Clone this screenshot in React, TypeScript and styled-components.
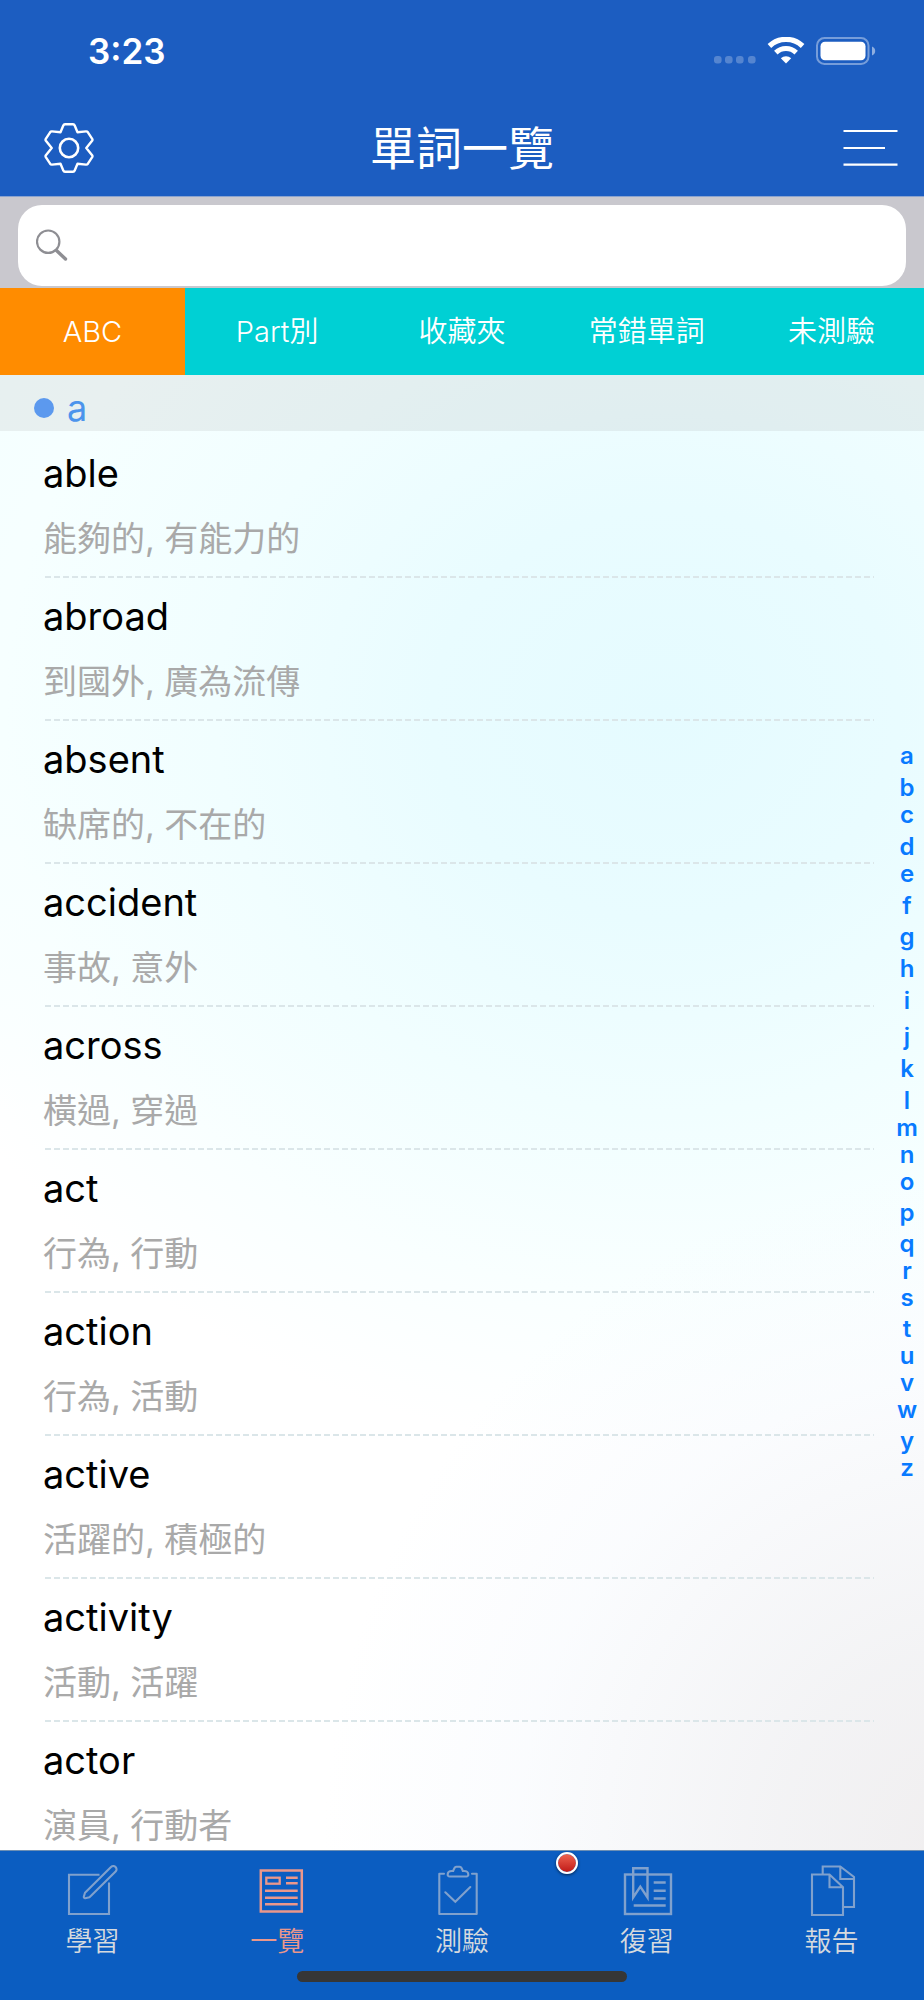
import React, { useState } from "react";
import styled, { createGlobalStyle } from "styled-components";

const GlobalStyle = createGlobalStyle`
  *, *::before, *::after { box-sizing: border-box; }
  body {
    margin: 0;
    font-family: Inter, "Noto Sans CJK TC", sans-serif;
    -webkit-font-smoothing: antialiased;
  }
  h1, h2, p, ul { margin: 0; padding: 0; font-weight: 400; }
  ul { list-style: none; }
  button { font: inherit; border: 0; padding: 0; background: none; cursor: pointer; }
  a { text-decoration: none; }
`;

const Screen = styled.div`
  display: flex;
  flex-direction: column;
  height: 100vh;
`;

const TopBar = styled.header`
  background: #1c5dc1;
  border-bottom: 1px solid #8aa3cf;
  color: #fff;
`;

const StatusBar = styled.div`
  display: flex;
  align-items: center;
  justify-content: space-between;
  height: 100px;
  padding: 2px 48px 0 88px;
`;

const Clock = styled.time`
  font-size: 35px;
  font-weight: 600;
  line-height: 44px;
`;

const StatusIcons = styled.div`
  display: flex;
  align-items: center;
  gap: 11px;
`;

const NavBar = styled.div`
  display: grid;
  grid-template-columns: 1fr auto 1fr;
  align-items: center;
  height: 96px;
  padding: 0 26px;
`;

const Title = styled.h1`
  font-size: 46px;
  line-height: 56px;
`;

const IconButton = styled.button<{ $end?: boolean }>`
  display: flex;
  margin-left: 18px;
  color: #fff;
  justify-self: ${(p) => (p.$end ? "end" : "start")};
`;

const SearchBar = styled.form`
  padding: 8px 18px 2px;
  background: #c9c8ce;
`;

const SearchField = styled.label`
  display: flex;
  align-items: center;
  height: 81px;
  padding: 0 18px;
  gap: 12px;
  border-radius: 24px;
  background: #fff;
  color: #8e8e93;
`;

const SearchInput = styled.input`
  flex: 1;
  min-width: 0;
  height: 56px;
  border: 0;
  outline: 0;
  background: transparent;
  font: inherit;
  font-size: 34px;
  color: #000;
`;

const FilterBar = styled.div`
  display: grid;
  grid-template-columns: repeat(5, 1fr);
  height: 87px;
  background: #00d0d4;
`;

const FilterTab = styled.button<{ $active: boolean }>`
  background: ${(p) => (p.$active ? "#ff8c00" : "transparent")};
  color: #fff;
  font-size: 29px;
  font-weight: 350;
  line-height: 40px;
`;

const Content = styled.main`
  position: relative;
  flex: 1;
  min-height: 0;
  background:
    radial-gradient(ellipse 70% 46% at 105% 100%, #f0eeef 0%, rgba(241, 241, 243, 0.85) 30%, rgba(246, 249, 253, 0.5) 70%, rgba(250, 253, 255, 0) 100%),
    radial-gradient(ellipse 90% 50% at 72% 23%, #e5fbff 0%, #e9fcff 28%, #f1feff 54%, rgba(247, 255, 255, 0.7) 80%, rgba(253, 255, 255, 0) 100%),
    linear-gradient(#f4ffff 0%, #f4ffff 25%, #fff 50%);
`;

const Scroller = styled.div`
  height: 100%;
  overflow-y: auto;
  scrollbar-width: none;
`;

const SectionHeader = styled.h2`
  display: flex;
  align-items: center;
  gap: 13px;
  height: 56px;
  padding: 9px 34px 0;
  background: rgba(20, 0, 0, 0.06);
  color: #4c94ec;
  font-size: 36px;
  line-height: 44px;
`;

const SectionDot = styled.span`
  width: 20px;
  height: 20px;
  border-radius: 50%;
  background: #5c99ee;
`;

const WordList = styled.ul`
  padding-top: 4px;
`;

const WordRow = styled.li`
  margin: 0 50px 0 43px;
  padding-top: 14px;

  &::after {
    content: "";
    display: block;
    height: 2px;
    margin: 17px 0 0 2px;
    background: repeating-linear-gradient(90deg, #dbe6e9 0 6px, transparent 6px 9px);
  }

  &:last-child::after { display: none; }
`;

const Word = styled.p`
  margin-bottom: 22px;
  color: #000;
  font-size: 38px;
  line-height: 48px;
`;

const Meaning = styled.p`
  color: #a9a9a9;
  font-size: 34px;
  line-height: 40px;
`;

const LetterIndex = styled.nav`
  position: absolute;
  inset: 0 0 0 auto;
  display: flex;
  flex-direction: column;
  justify-content: center;
  width: 34px;
  padding-bottom: 2px;
`;

const IndexLetter = styled.a<{ $ascends: boolean; $descends: boolean }>`
  padding-top: ${(p) => (p.$ascends ? 5 : 0) + (p.$descends ? 4 : 0)}px;
  color: #087aff;
  font-size: 24px;
  font-weight: 600;
  line-height: 27px;
  text-align: center;
`;

const BottomBar = styled.nav`
  display: flex;
  flex-direction: column;
  gap: 13px;
  padding: 13px 0 18px;
  border-top: 1px solid #6d8fb4;
  background: #0b5dc1;
`;

const BottomTabs = styled.div`
  display: grid;
  grid-template-columns: repeat(5, 1fr);
`;

const BottomTab = styled.a<{ $active: boolean }>`
  position: relative;
  display: flex;
  flex-direction: column;
  align-items: center;
  gap: 10px;
  color: ${(p) => (p.$active ? "#ea978b" : "#d6dade")};
  font-size: 27px;
  font-weight: 350;
  line-height: 32px;

  svg { color: ${(p) => (p.$active ? "#ea978b" : "#80a1cd")}; }
`;

const Badge = styled.span`
  position: absolute;
  top: -12px;
  left: 2px;
  width: 22px;
  height: 22px;
  border: 2px solid #fff;
  border-radius: 50%;
  background: linear-gradient(#ee6350, #c01a18);
  background-clip: padding-box;
  box-shadow: 0 1px 3px rgba(0, 0, 0, 0.6);
`;

const HomeIndicator = styled.div`
  align-self: center;
  width: 330px;
  height: 11px;
  border-radius: 6px;
  background: #363636;
`;

const SignalDots = () => (
  <svg width="42" height="28" viewBox="0 0 42 28" fill="#fff" fillOpacity="0.25" aria-hidden="true">
    {[0, 11, 22, 34].map((x) => (
      <rect key={x} x={x} y="19" width="7.6" height="7.6" rx="3" />
    ))}
  </svg>
);

const WifiIcon = () => (
  <svg width="38" height="28" viewBox="0 0 38 28" fill="none" stroke="#fff" aria-hidden="true">
    <path d="M2.4 9a24 24 0 0 1 33.2 0" strokeWidth="5.2" />
    <path d="M8.8 15.6a14.8 14.8 0 0 1 20.4 0" strokeWidth="5" />
    <path d="M19 26.6 13.8 21.2a7.6 7.6 0 0 1 10.4 0Z" fill="#fff" stroke="none" />
  </svg>
);

const BatteryIcon = () => (
  <svg width="60" height="28" viewBox="0 0 60 28" aria-hidden="true">
    <rect x="1" y="1" width="51.5" height="26" rx="7.5" fill="none" stroke="#fff" strokeOpacity="0.4" strokeWidth="2" />
    <rect x="4.5" y="4.7" width="45" height="18.6" rx="4.5" fill="#fff" />
    <path d="M56 9.5c2 .9 3.2 2.5 3.2 4.5s-1.2 3.7-3.2 4.6Z" fill="#fff" fillOpacity="0.5" />
  </svg>
);

const GearIcon = () => (
  <svg width="50" height="50" viewBox="-25 -25 50 50" fill="none" stroke="currentColor" strokeWidth="2.4" strokeLinejoin="round" aria-hidden="true">
    <path d="M-4 -23.7H4Q5.2 -23.7 5.7 -22.5L8.5 -15.8 17 -16.6Q18.2 -16.7 18.9 -15.7L23.2 -9.2Q23.8 -8.2 23.1 -7.2L17.3 0 23.1 7.2Q23.8 8.2 23.2 9.2L18.9 15.7Q18.2 16.7 17 16.6L8.5 15.8 5.7 22.5Q5.2 23.7 4 23.7H-4Q-5.2 23.7 -5.7 22.5L-8.5 15.8 -17 16.6Q-18.2 16.7 -18.9 15.7L-23.2 9.2Q-23.8 8.2 -23.1 7.2L-17.3 0 -23.1 -7.2Q-23.8 -8.2 -23.2 -9.2L-18.9 -15.7Q-18.2 -16.7 -17 -16.6L-8.5 -15.8 -5.7 -22.5Q-5.2 -23.7 -4 -23.7Z" />
    <circle r="9.2" strokeWidth="2.6" />
  </svg>
);

const MenuIcon = () => (
  <svg width="55" height="38" viewBox="0 0 55 38" fill="none" stroke="currentColor" strokeWidth="2.2" aria-hidden="true">
    <path d="M0.5 2H54.5M0.5 19H42M0.5 35.7H54.5" />
  </svg>
);

const SearchIcon = () => (
  <svg width="32" height="34" viewBox="0 0 32 34" fill="none" stroke="currentColor" aria-hidden="true">
    <circle cx="12.2" cy="12.7" r="11.2" strokeWidth="2.2" />
    <path d="M20.5 21.5 29.5 30" strokeWidth="3.4" strokeLinecap="round" />
  </svg>
);

const TabIcon = ({ children }: { children: React.ReactNode }) => (
  <svg width="56" height="52" viewBox="0 0 56 52" fill="none" stroke="currentColor" strokeWidth="2.1" aria-hidden="true">
    {children}
  </svg>
);

const StudyIcon = () => (
  <TabIcon>
    <path d="M35.5 10.8H5V50H45V18.5" />
    <path d="M47 3a3.2 3.2 0 0 1 4.6 4.6L25.5 33.2 21.2 34.2a1.2 1.2 0 0 1-1.4-1.4L21 28.8Z" strokeLinejoin="round" />
  </TabIcon>
);

const ListIcon = () => (
  <TabIcon>
    <rect x="11.8" y="6.5" width="41" height="41" strokeWidth="2.5" />
    <rect x="17.3" y="13.7" width="13.4" height="6" strokeWidth="2.3" />
    <path d="M37 13.7H48.7M37 19.3H48.7M16 26.7H48.7M16 33.7H48.7M16 40.2H48.7" strokeWidth="2.4" />
  </TabIcon>
);

const QuizIcon = () => (
  <TabIcon>
    <path d="M10 9.8H5.3V50H42.7V9.8H38" strokeLinejoin="round" strokeLinecap="round" />
    <path d="M15.5 12.5h17a1.8 1.8 0 0 0 1.8-2c0-2.5-2-3.5-4-3.5h-1.5c-.8-2.5-1.2-4.3-3.2-4.3h-3.2c-2 0-2.4 1.8-3.2 4.3h-1.5c-2 0-4 1-4 3.5a1.8 1.8 0 0 0 1.8 2z" />
    <path d="M11.3 28.3 21.3 37.7 36.3 23" strokeLinecap="round" />
  </TabIcon>
);

const ReviewIcon = () => (
  <TabIcon>
    <rect x="6" y="10.5" width="46" height="39.5" strokeWidth="2.4" />
    <path d="M14.2 4.2H28.5V33.5L21.3 22.7 14.2 33.5Z" strokeWidth="2.4" />
    <path d="M34.7 18.5H46.7M34.7 26.7H46.7M34.7 34.5H46.7M14.7 41.5H46.7" strokeWidth="2.4" />
  </TabIcon>
);

const ReportIcon = () => (
  <TabIcon>
    <path d="M8 10.5H25.5L39 23.2V51H8ZM25.5 10.5V23.2H39" />
    <path d="M18.7 10.5V2.5H36.3L50 13V43H39M36.3 2.5V15H50" />
  </TabIcon>
);

const FILTERS = ["ABC", "Part別", "收藏夾", "常錯單詞", "未測驗"];

const WORDS = [
  ["able", "能夠的, 有能力的"],
  ["abroad", "到國外, 廣為流傳"],
  ["absent", "缺席的, 不在的"],
  ["accident", "事故, 意外"],
  ["across", "橫過, 穿過"],
  ["act", "行為, 行動"],
  ["action", "行為, 活動"],
  ["active", "活躍的, 積極的"],
  ["activity", "活動, 活躍"],
  ["actor", "演員, 行動者"],
];

const LETTERS = "abcdefghijklmnopqrstuvwyz".split("");

const TABS = [
  { id: "study", label: "學習", Icon: StudyIcon },
  { id: "list", label: "一覽", Icon: ListIcon },
  { id: "quiz", label: "測驗", Icon: QuizIcon },
  { id: "review", label: "復習", Icon: ReviewIcon, badge: true },
  { id: "report", label: "報告", Icon: ReportIcon },
];

export default function App() {
  const [filter, setFilter] = useState(FILTERS[0]);
  const [query, setQuery] = useState("");
  const words = WORDS.filter(([word]) => word.startsWith(query.toLowerCase()));

  return (
    <Screen>
      <GlobalStyle />
      <TopBar>
        <StatusBar>
          <Clock>3:23</Clock>
          <StatusIcons>
            <SignalDots />
            <WifiIcon />
            <BatteryIcon />
          </StatusIcons>
        </StatusBar>
        <NavBar>
          <IconButton type="button" aria-label="設定">
            <GearIcon />
          </IconButton>
          <Title>單詞一覽</Title>
          <IconButton type="button" aria-label="選單" $end>
            <MenuIcon />
          </IconButton>
        </NavBar>
      </TopBar>

      <SearchBar role="search" onSubmit={(e) => e.preventDefault()}>
        <SearchField>
          <SearchIcon />
          <SearchInput type="text" aria-label="搜尋" value={query} onChange={(e) => setQuery(e.target.value)} />
        </SearchField>
      </SearchBar>

      <FilterBar>
        {FILTERS.map((name) => (
          <FilterTab key={name} type="button" aria-pressed={name === filter} $active={name === filter} onClick={() => setFilter(name)}>
            {name}
          </FilterTab>
        ))}
      </FilterBar>

      <Content>
        <Scroller>
          <SectionHeader id="a">
            <SectionDot />a
          </SectionHeader>
          <WordList>
            {words.map(([word, meaning]) => (
              <WordRow key={word}>
                <Word>{word}</Word>
                <Meaning>{meaning}</Meaning>
              </WordRow>
            ))}
          </WordList>
        </Scroller>
        <LetterIndex aria-label="字母索引">
          {LETTERS.map((letter) => (
            <IndexLetter key={letter} href={`#${letter}`} $ascends={"bdfhijkl".includes(letter)} $descends={"gjpqty".includes(letter)}>
              {letter}
            </IndexLetter>
          ))}
        </LetterIndex>
      </Content>

      <BottomBar>
        <BottomTabs>
          {TABS.map(({ id, label, Icon, badge }) => (
            <BottomTab key={id} href={`#${id}`} $active={id === "list"}>
              <Icon />
              {label}
              {badge && <Badge />}
            </BottomTab>
          ))}
        </BottomTabs>
        <HomeIndicator />
      </BottomBar>
    </Screen>
  );
}
